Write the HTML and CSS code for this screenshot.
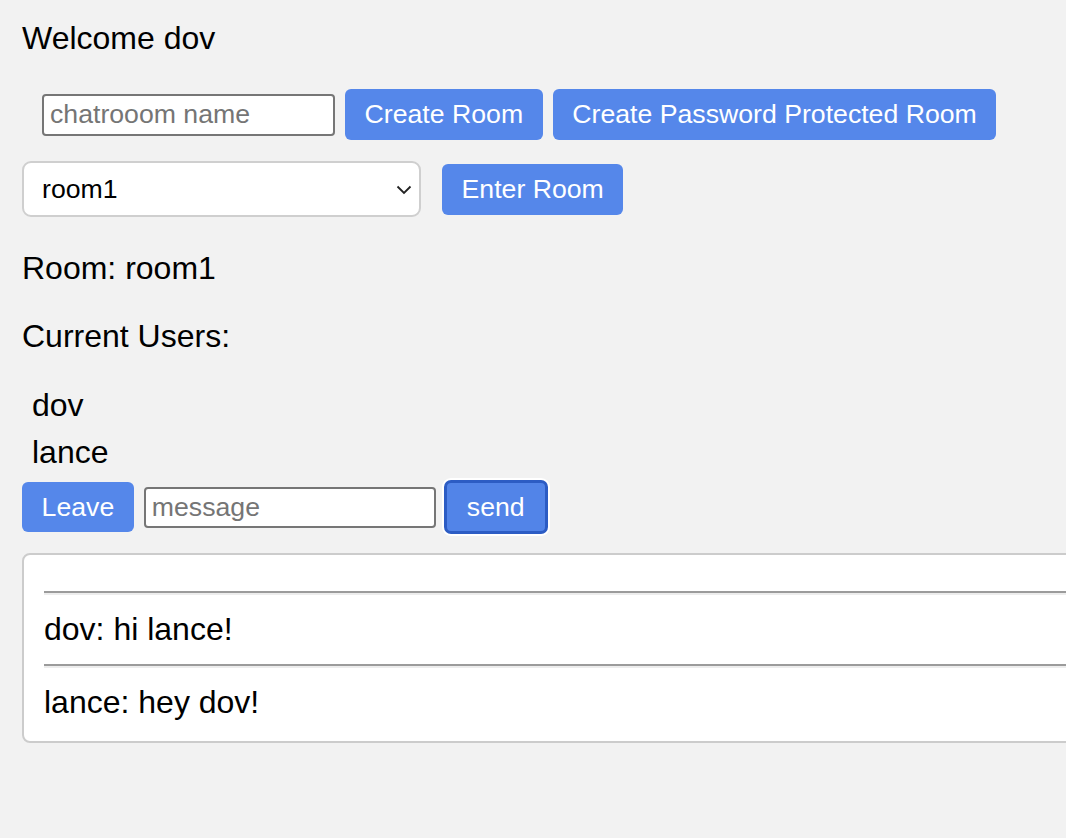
FILE: index.html
```html
<!DOCTYPE html>
<html lang="en">
<head>
<meta charset="utf-8">
<title>Chat</title>
<link rel="stylesheet" href="styles.css">
</head>
<body>
<div class="welcome">Welcome dov</div>
<div class="create-row">
  <input class="text-input" type="text" placeholder="chatrooom name">
  <button class="btn">Create Room</button>
  <button class="btn">Create Password Protected Room</button>
</div>
<div class="enter-row">
  <div class="select-wrap">
    <select class="room-select">
      <option>room1</option>
    </select>
    <svg class="chevron" width="16" height="10" viewBox="0 0 16 10"><path d="M1.5 1.5 L8 8 L14.5 1.5" fill="none" stroke="#222" stroke-width="1.8"/></svg>
  </div>
  <button class="btn">Enter Room</button>
</div>
<div class="room-label">Room: room1</div>
<div class="users-label">Current Users:</div>
<div class="users">
  <div class="user">dov</div>
  <div class="user">lance</div>
</div>
<div class="msg-row">
  <button class="btn">Leave</button>
  <input class="text-input msg-input" type="text" placeholder="message">
  <button class="btn btn-focus">send</button>
</div>
<div class="chat">
  <hr class="sep">
  <div class="msg">dov: hi lance!</div>
  <hr class="sep">
  <div class="msg">lance: hey dov!</div>
</div>
</body>
</html>
```
FILE: styles.css
```css
html {
  overflow: hidden;
}
body {
  margin: 0;
  padding: 20px 0 0 22px;
  background: #f2f2f2;
  color: #000;
  font-family: "Liberation Sans", Arial, sans-serif;
  font-size: 32px;
  line-height: 37px;
}
.welcome {
  height: 37px;
  margin-bottom: 32px;
}
.create-row {
  display: flex;
  align-items: center;
  gap: 10px;
  height: 51px;
  padding-left: 20px;
  margin-bottom: 21px;
}
.text-input {
  box-sizing: border-box;
  width: 293px;
  height: 42px;
  margin: 0;
  padding: 0 6px;
  border: 2px solid #767676;
  border-radius: 4px;
  background: #fff;
  font-family: "Liberation Sans", Arial, sans-serif;
  font-size: 26.67px;
  color: #000;
  outline: none;
}
.text-input::placeholder {
  color: #757575;
}
.btn {
  box-sizing: border-box;
  height: 51px;
  margin: 0;
  padding: 0 19.6px;
  border: none;
  border-radius: 6px;
  background: #5587ea;
  color: #fff;
  font-family: "Liberation Sans", Arial, sans-serif;
  font-size: 26.67px;
  line-height: 51px;
  white-space: nowrap;
}
.enter-row {
  display: flex;
  align-items: center;
  gap: 21px;
  height: 56px;
  margin-bottom: 33px;
}
.select-wrap {
  position: relative;
  width: 399px;
  height: 56px;
}
.room-select {
  box-sizing: border-box;
  width: 100%;
  height: 100%;
  margin: 0;
  padding: 0 18px;
  border: 2px solid #cfcfcf;
  border-radius: 9px;
  background: #fff;
  color: #000;
  font-family: "Liberation Sans", Arial, sans-serif;
  font-size: 26.67px;
  -webkit-appearance: none;
  appearance: none;
  outline: none;
}
.chevron {
  position: absolute;
  right: 9px;
  top: 24px;
  pointer-events: none;
}
.room-label {
  height: 37px;
  margin-bottom: 31px;
}
.users-label {
  height: 37px;
}
.users {
  margin-top: 27px;
}
.user {
  padding: 5px 10px;
  height: 37px;
}
.msg-row {
  display: flex;
  align-items: center;
  gap: 10px;
  height: 50px;
  margin-top: 6px;
}
.msg-row .btn {
  height: 50px;
  line-height: 50px;
}
.msg-input {
  width: 292px;
  height: 41px;
}
.msg-row .btn-focus {
  height: 54px;
  line-height: 48px;
  padding: 0 20px;
  margin-left: -2px;
  border: 3px solid #2c5cc4;
  border-radius: 7px;
  background: #5284e8;
  box-shadow: 0 0 0 2px #fff;
}
.chat {
  box-sizing: border-box;
  width: 1120px;
  margin-top: 21px;
  padding: 20px;
  border: 2px solid #cccccc;
  border-radius: 8px;
  background: #fff;
}
.sep {
  height: 0;
  margin: 16px 0;
  border: none;
  border-top: 2px solid #9b9b9b;
  border-bottom: 2px solid #ededed;
}
.msg {
  height: 37px;
}
```
